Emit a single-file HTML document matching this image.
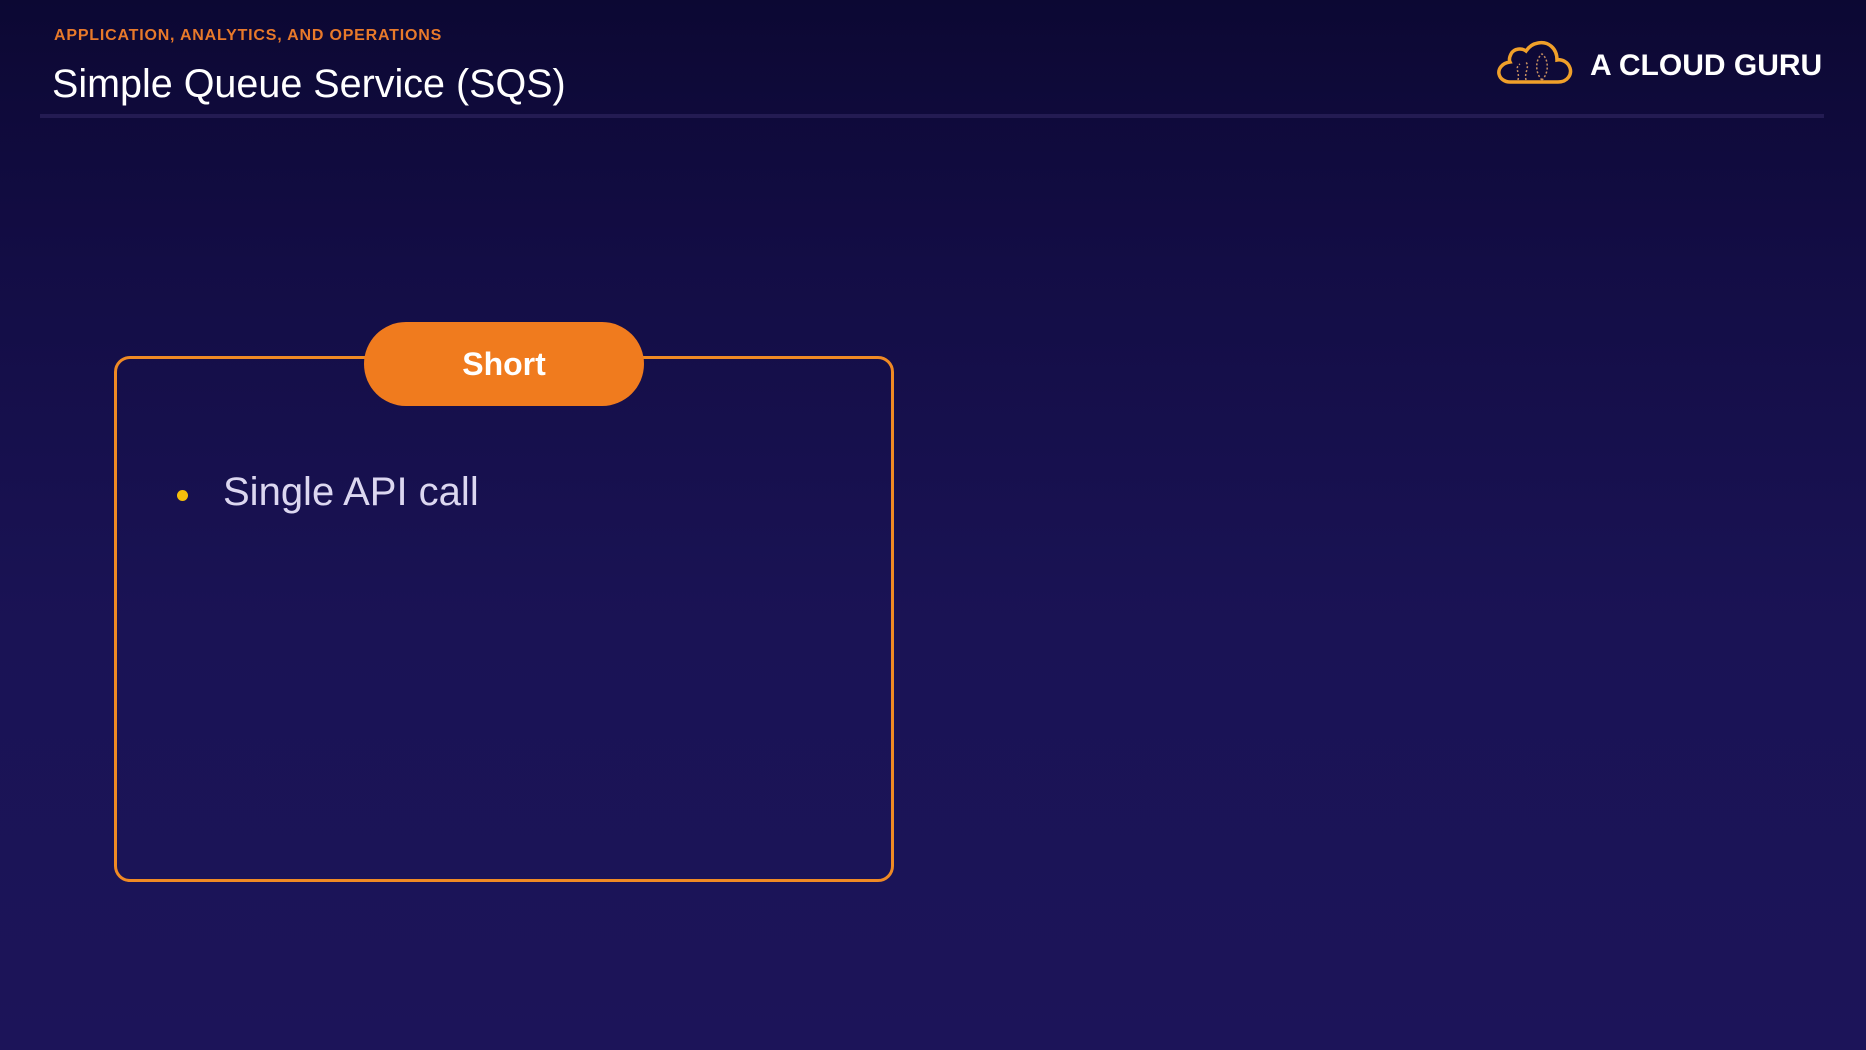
<!DOCTYPE html>
<html><head><meta charset="utf-8"><style>
html,body{margin:0;padding:0}
body{width:1866px;height:1050px;overflow:hidden;position:relative;font-family:"Liberation Sans",sans-serif;
background:linear-gradient(180deg,#0c0833 0%,#130d45 25%,#1a1355 60%,#1c1459 100%);}
.sub{position:absolute;left:54px;top:27px;font-size:16px;font-weight:bold;color:#e8792a;letter-spacing:0.8px}
.title{position:absolute;left:52px;top:62px;font-size:39.5px;color:#fff}
.line{position:absolute;left:40px;top:114px;width:1784px;height:4px;background:#231b52}
.logo{position:absolute;left:1590px;top:49px;font-size:30px;font-weight:bold;color:#fff;letter-spacing:0}
.box{position:absolute;left:114px;top:356px;width:774px;height:520px;border:3px solid #f08a24;border-radius:16px}
.pill{position:absolute;left:364px;top:322px;width:280px;height:84px;border-radius:42px;background:#f07b1e;color:#fff;font-weight:bold;font-size:32px;text-align:center;line-height:84px}
.dot{position:absolute;left:177px;top:490px;width:11px;height:11px;border-radius:50%;background:#f5be0b}
.txt{position:absolute;left:223px;top:470px;font-size:40px;color:#dcd7f0}
</style></head><body>
<div class="sub">APPLICATION, ANALYTICS, AND OPERATIONS</div>
<div class="title">Simple Queue Service (SQS)</div>
<div class="line"></div>
<svg style="position:absolute;left:1496px;top:38px" width="78" height="48" viewBox="0 0 78 48">
<path d="M14 44 H62 C72 44 76 36 74 30 C72 24 66 21 61 22 C61 10 52 3 42 5 C36 6 32 10 30 13 C26 10 18 10 15 16 C13 20 13 22 14 24 C6 25 2 31 3 36 C4 41 9 44 14 44 Z" fill="none" stroke="#f0a02a" stroke-width="3.5"/>
<path d="M22 42 C24 34 18 30 24 26 M30 42 C28 34 34 30 30 24 M46 42 C38 34 40 20 46 16 C52 20 54 34 46 42" fill="none" stroke="#c89060" stroke-width="1.5" stroke-dasharray="2 2"/>
</svg>
<div class="logo">A CLOUD GURU</div>
<div class="box"></div>
<div class="pill">Short</div>
<div class="dot"></div>
<div class="txt">Single API call</div>
</body></html>
